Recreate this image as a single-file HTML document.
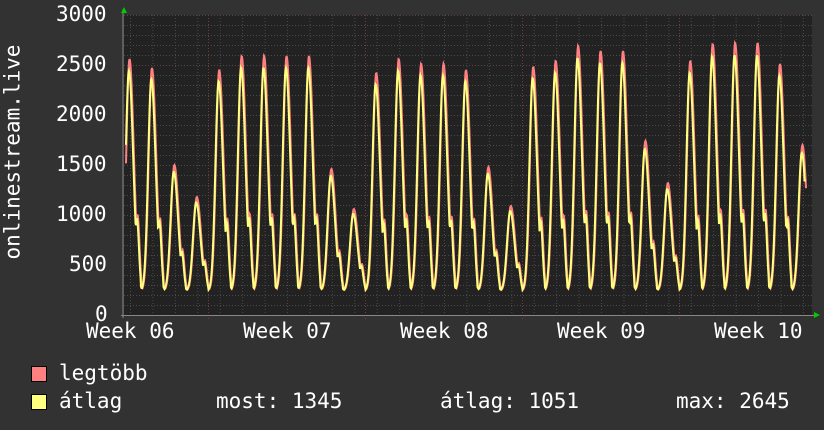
<!DOCTYPE html>
<html><head><meta charset="utf-8"><style>
html,body{margin:0;padding:0;background:#323232;}
body{width:824px;height:430px;overflow:hidden;position:relative;font-family:"DejaVu Sans Mono","Liberation Mono",monospace;color:#fff;}
.t{position:absolute;font-size:21px;white-space:pre;line-height:1;}
.sq{position:absolute;width:14px;height:14px;border:1px solid #000;}
</style></head><body>
<svg id="g" width="824" height="430" style="position:absolute;left:0;top:0"></svg>
<div class="t" style="left:56px;top:4px">3000</div>
<div class="t" style="left:56px;top:54px">2500</div>
<div class="t" style="left:56px;top:104px">2000</div>
<div class="t" style="left:56px;top:154px">1500</div>
<div class="t" style="left:56px;top:204px">1000</div>
<div class="t" style="left:69px;top:254px">500</div>
<div class="t" style="left:95px;top:304px">0</div>
<div class="t" style="left:86px;top:321px">Week 06</div>
<div class="t" style="left:243px;top:321px">Week 07</div>
<div class="t" style="left:400px;top:321px">Week 08</div>
<div class="t" style="left:557px;top:321px">Week 09</div>
<div class="t" style="left:714px;top:321px">Week 10</div>
<div class="t" style="left:-82px;top:154px;transform:rotate(-90deg);transform-origin:center;width:190px;text-align:center">onlinestream.live</div>
<div class="sq" style="left:31px;top:366px;background:#ff8080"></div>
<div class="t" style="left:59px;top:363px">legtöbb</div>
<div class="sq" style="left:31px;top:394px;background:#ffff80"></div>
<div class="t" style="left:59px;top:391px">átlag</div>
<div class="t" style="left:216px;top:391px">most: 1345</div>
<div class="t" style="left:440px;top:391px">átlag: 1051</div>
<div class="t" style="left:676px;top:391px">max: 2645</div>
<script>
var s='',L=124,R=812,T=15,B=315;
s+='<rect x="'+L+'" y="'+T+'" width="'+(R-L)+'" height="'+(B-T)+'" fill="#222"/>';
for(var y=B-10;y>T-1;y-=10){var maj=((B-y)%50==0);s+='<line x1="'+L+'" x2="'+R+'" y1="'+(y+.5)+'" y2="'+(y+.5)+'" stroke="'+(maj?'#5a4444':'#4a4a4a')+'" stroke-dasharray="1,2"/>';}
for(var x=130.5;x<R;x+=22.43){s+='<line x1="'+x+'" x2="'+x+'" y1="'+T+'" y2="'+B+'" stroke="#4a4a4a" stroke-dasharray="1,2"/>';}
[208.5,365.5,522.5,679.5].forEach(function(x){s+='<line x1="'+x+'" x2="'+x+'" y1="'+T+'" y2="'+(B+4)+'" stroke="#7a3a3a" stroke-dasharray="1,2"/>';});
var pk=[2560,2470,1500,1180,2450,2590,2590,2590,2590,1460,1060,2420,2560,2510,2510,2450,1480,1090,2480,2540,2690,2640,2640,1740,1320,2540,2710,2720,2720,2510,1700];
function val(x,sc){var v=240;for(var i=0;i<pk.length;i++){var px=129.5+i*22.43,d=x-px;var w=d<0?3.2:4.3;var f=Math.exp(-(d*d)/(2*w*w));
if(d>4&&d<12)f=Math.max(f,0.33*Math.exp(-((d-8)*(d-8))/8));
var p=pk[i]*sc;var vv=240+(p-240)*f;if(vv>v)v=vv;}return v;}
function line(sc,col,off){var pts=[];for(var x=L+2;x<=806;x+=0.5){var v=val(x+off,sc);if(x>804&&sc<1)v=1345;pts.push(x+','+(B-v/10).toFixed(1));}return '<polyline points="'+pts.join(' ')+'" fill="none" stroke="'+col+'" stroke-width="2"/>';}
s+=line(1,'#ff8080',0);
s+=line(0.955,'#ffff80',0.6);
s+='<line x1="'+(L-1)+'" x2="'+(L-1)+'" y1="'+(T-6)+'" y2="'+(B+3)+'" stroke="#888"/>';
s+='<line x1="'+(L-3)+'" x2="'+(R+3)+'" y1="'+(B+.5)+'" y2="'+(B+.5)+'" stroke="#888"/>';
s+='<polygon points="121,13 127,13 124,7" fill="#0c0"/><polygon points="814,312 814,318 820,315" fill="#0c0"/>';
document.getElementById('g').innerHTML=s;
</script>
</body></html>
